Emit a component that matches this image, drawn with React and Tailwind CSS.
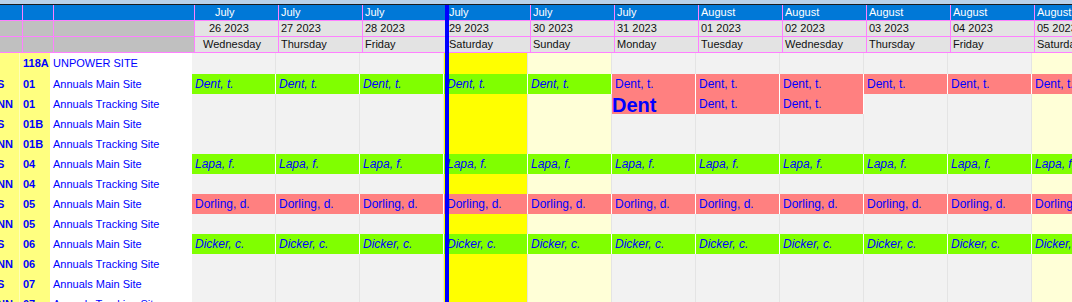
import React from "react";

const days = [
  { m: "July", d: "26 2023", w: "Wednesday", bg: "bg-[#f2f2f2]", first: true },
  { m: "July", d: "27 2023", w: "Thursday", bg: "bg-[#f2f2f2]" },
  { m: "July", d: "28 2023", w: "Friday", bg: "bg-[#f2f2f2]" },
  { m: "July", d: "29 2023", w: "Saturday", bg: "bg-[#ffff00]" },
  { m: "July", d: "30 2023", w: "Sunday", bg: "bg-[#ffffd7]" },
  { m: "July", d: "31 2023", w: "Monday", bg: "bg-[#f2f2f2]" },
  { m: "August", d: "01 2023", w: "Tuesday", bg: "bg-[#f2f2f2]" },
  { m: "August", d: "02 2023", w: "Wednesday", bg: "bg-[#f2f2f2]" },
  { m: "August", d: "03 2023", w: "Thursday", bg: "bg-[#f2f2f2]" },
  { m: "August", d: "04 2023", w: "Friday", bg: "bg-[#f2f2f2]" },
  { m: "August", d: "05 2023", w: "Saturday", bg: "bg-[#ffffd7]" },
];

const G = (t) => ({ kind: "g", t });
const R = (t) => ({ kind: "r", t });
const BIG = { kind: "big", t: "Dent" };
const all = (f, t) => Array.from({ length: 11 }, () => f(t));

const rows = [
  { a: "", b: "118A", c: "UNPOWER SITE", cells: [], h: "h-[21px]" },
  {
    a: "S",
    b: "01",
    c: "Annuals Main Site",
    cells: [
      G("Dent, t."), G("Dent, t."), G("Dent, t."), G("Dent, t."), G("Dent, t."),
      R("Dent, t."), R("Dent, t."), R("Dent, t."), R("Dent, t."), R("Dent, t."), R("Dent, t."),
    ],
  },
  {
    a: "NN",
    b: "01",
    c: "Annuals Tracking Site",
    cells: [null, null, null, null, null, BIG, R("Dent, t."), R("Dent, t.")],
  },
  { a: "S", b: "01B", c: "Annuals Main Site", cells: [] },
  { a: "NN", b: "01B", c: "Annuals Tracking Site", cells: [] },
  { a: "S", b: "04", c: "Annuals Main Site", cells: all(G, "Lapa, f.") },
  { a: "NN", b: "04", c: "Annuals Tracking Site", cells: [] },
  { a: "S", b: "05", c: "Annuals Main Site", cells: all(R, "Dorling, d.") },
  { a: "NN", b: "05", c: "Annuals Tracking Site", cells: [] },
  { a: "S", b: "06", c: "Annuals Main Site", cells: all(G, "Dicker, c.") },
  { a: "NN", b: "06", c: "Annuals Tracking Site", cells: [] },
  { a: "S", b: "07", c: "Annuals Main Site", cells: [] },
  { a: "NN", b: "07", c: "Annuals Tracking Site", cells: [] },
];

function Cell({ day, cell }) {
  let inner;
  if (!cell) {
    inner = <div className={`w-[83px] h-full ${day.bg}`} />;
  } else if (cell.kind === "g") {
    inner = (
      <div className="w-[83px] h-full bg-[#80ff00] pl-[3px] italic text-[12px] whitespace-nowrap overflow-hidden">
        {cell.t}
      </div>
    );
  } else if (cell.kind === "r") {
    inner = (
      <div className="w-[83px] h-full bg-[#ff8080] pl-[3px] text-[12px] whitespace-nowrap overflow-hidden">
        {cell.t}
      </div>
    );
  } else {
    inner = (
      <div className="w-[83px] h-full bg-[#ff8080] pl-0 pt-[1px] font-bold text-[20px] leading-[20px] whitespace-nowrap overflow-hidden">
        {cell.t}
      </div>
    );
  }
  return (
    <div className="flex shrink-0 w-[84px] h-full">
      {inner}
      <div className={`w-px h-full ${cell ? "bg-white" : "bg-[#e4e4e4]"}`} />
    </div>
  );
}

export default function App() {
  return (
    <div className="relative w-[1072px] h-[302px] overflow-hidden bg-white font-['Liberation_Sans',Arial,sans-serif] text-[11px]">
      <div className="h-[4px] bg-[#b9d1ea]" />
      <div className="h-px bg-[#1b1b1b]" />
      {/* header */}
      <div className="w-max border-b border-[#ff80ff]">
        <div className="grid w-max grid-cols-[22px_30px_140px_repeat(11,83px)] grid-rows-[15px_15px_15px] gap-px bg-[#ff80ff] leading-[15px]">
          <div className="bg-[#0078d7]" />
          <div className="bg-[#0078d7]" />
          <div className="bg-[#0078d7]" />
          {days.map((d) => (
            <div
              key={"m" + d.d}
              className={`bg-[#0078d7] text-white whitespace-nowrap overflow-hidden ${d.first ? "pl-[20px]" : "pl-[2px]"}`}
            >
              {d.m}
            </div>
          ))}
          <div className="bg-[#c0c0c0]" />
          <div className="bg-[#c0c0c0]" />
          <div className="bg-[#c0c0c0]" />
          {days.map((d) => (
            <div
              key={"d" + d.d}
              className={`bg-[#e3e3e3] text-[#111] whitespace-nowrap overflow-hidden ${d.first ? "pl-[14px]" : "pl-[2px]"}`}
            >
              {d.d}
            </div>
          ))}
          <div className="bg-[#c0c0c0]" />
          <div className="bg-[#c0c0c0]" />
          <div className="bg-[#c0c0c0]" />
          {days.map((d) => (
            <div
              key={"w" + d.d}
              className={`bg-[#e3e3e3] text-[#111] whitespace-nowrap overflow-hidden ${d.first ? "pl-[8px]" : "pl-[2px]"}`}
            >
              {d.w}
            </div>
          ))}
        </div>
      </div>
      {/* body */}
      <div className="flex flex-col w-max text-[#0000ff] leading-[20px]">
        {rows.map((r, i) => (
          <div key={i} className={`flex ${r.h || "h-[20px]"}`}>
            <div className="w-[19px] shrink-0 bg-[#ffff80] overflow-hidden font-bold whitespace-nowrap">
              <span className="block ml-[-3px]">{r.a}</span>
            </div>
            <div className="w-px shrink-0 bg-[#ffffb8]" />
            <div className="w-[30px] shrink-0 bg-[#ffff80] pl-[3px] font-bold whitespace-nowrap overflow-hidden">
              {r.b}
            </div>
            <div className="w-[142px] shrink-0 bg-white pl-[3px] whitespace-nowrap overflow-hidden">
              {r.c}
            </div>
            {days.map((d, j) => (
              <Cell key={j} day={d} cell={r.cells[j] || null} />
            ))}
          </div>
        ))}
      </div>
      <div className="absolute left-[445px] top-[5px] bottom-0 w-[4px] bg-[#0000ff]" />
    </div>
  );
}
